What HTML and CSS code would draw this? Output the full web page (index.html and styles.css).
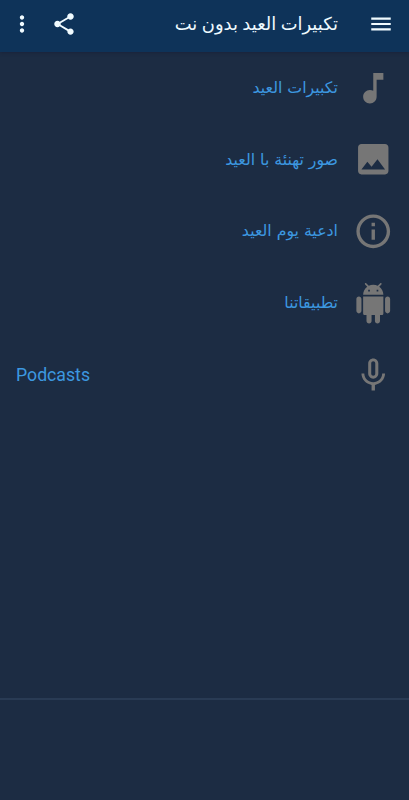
FILE: index.html
```html
<!DOCTYPE html>
<html lang="ar" dir="rtl">
<head>
<meta charset="utf-8">
<title>تكبيرات العيد بدون نت</title>
<link rel="stylesheet" href="styles.css">
</head>
<body>
<header class="bar">
  <svg class="bar-icon menu" viewBox="0 0 24 24"><path d="M3 18h18v-2H3v2zm0-5h18v-2H3v2zm0-7v2h18V6H3z"/></svg>
  <h1 class="title"><span>تكبيرات العيد بدون نت</span></h1>
  <svg class="bar-icon share" viewBox="0 0 24 24"><path d="M18 16.08c-.76 0-1.44.3-1.96.77L8.91 12.7c.05-.23.09-.46.09-.7s-.04-.47-.09-.7l7.05-4.11c.54.5 1.25.81 2.04.81 1.66 0 3-1.34 3-3s-1.34-3-3-3-3 1.34-3 3c0 .24.04.47.09.7L8.04 9.81C7.5 9.31 6.79 9 6 9c-1.66 0-3 1.34-3 3s1.34 3 3 3c.79 0 1.5-.31 2.04-.81l7.12 4.16c-.05.21-.08.43-.08.65 0 1.61 1.31 2.92 2.92 2.92s2.92-1.31 2.92-2.92-1.31-2.92-2.92-2.92z"/></svg>
  <svg class="bar-icon more" viewBox="0 0 24 24"><path d="M12 8c1.1 0 2-.9 2-2s-.9-2-2-2-2 .9-2 2 .9 2 2 2zm0 2c-1.1 0-2 .9-2 2s.9 2 2 2 2-.9 2-2-.9-2-2-2zm0 6c-1.1 0-2 .9-2 2s.9 2 2 2 2-.9 2-2-.9-2-2-2z"/></svg>
</header>
<main class="list">
  <div class="row">
    <svg class="icon" viewBox="0 0 24 24"><path d="M12 3v10.55c-.59-.34-1.27-.55-2-.55-2.21 0-4 1.79-4 4s1.79 4 4 4 4-1.79 4-4V7h4V3h-6z"/></svg>
    <span class="label">تكبيرات العيد</span>
  </div>
  <div class="row">
    <svg class="icon" viewBox="0 0 24 24"><path d="M21 19V5c0-1.1-.9-2-2-2H5c-1.1 0-2 .9-2 2v14c0 1.1.9 2 2 2h14c1.1 0 2-.9 2-2zM8.5 13.5l2.5 3.01L14.5 12l4.5 6H5l3.5-4.5z"/></svg>
    <span class="label">صور تهنئة با العيد</span>
  </div>
  <div class="row">
    <svg class="icon" viewBox="0 0 24 24"><path d="M11 17h2v-6h-2v6zm1-15C6.48 2 2 6.48 2 12s4.48 10 10 10 10-4.48 10-10S17.52 2 12 2zm0 18c-4.41 0-8-3.59-8-8s3.59-8 8-8 8 3.59 8 8-3.59 8-8 8zM11 9h2V7h-2v2z"/></svg>
    <span class="label">ادعية يوم العيد</span>
  </div>
  <div class="row">
    <svg class="icon" viewBox="0 0 24 24"><path d="M6 18c0 .55.45 1 1 1h1v3.5c0 .83.67 1.5 1.5 1.5s1.5-.67 1.5-1.5V19h2v3.5c0 .83.67 1.5 1.5 1.5s1.5-.67 1.5-1.5V19h1c.55 0 1-.45 1-1V8H6v10zM3.5 8C2.67 8 2 8.67 2 9.5v7c0 .83.67 1.5 1.5 1.5S5 17.33 5 16.5v-7C5 8.67 4.33 8 3.5 8zm17 0c-.83 0-1.5.67-1.5 1.5v7c0 .83.67 1.5 1.5 1.5s1.5-.67 1.5-1.5v-7c0-.83-.67-1.5-1.5-1.5zm-4.97-5.84l1.3-1.3c.2-.2.2-.51 0-.71-.2-.2-.51-.2-.71 0l-1.48 1.48C13.85 1.23 12.95 1 12 1c-.96 0-1.86.23-2.66.63L7.85.15c-.2-.2-.51-.2-.71 0-.2.2-.2.51 0 .71l1.31 1.31C6.97 3.26 6 5.01 6 7h12c0-1.99-.97-3.75-2.47-4.84zM10 5H9V4h1v1zm5 0h-1V4h1v1z"/></svg>
    <span class="label">تطبيقاتنا</span>
  </div>
  <div class="row">
    <svg class="icon" viewBox="0 0 24 24"><path d="M12 14c1.66 0 3-1.34 3-3V5c0-1.66-1.34-3-3-3S9 3.34 9 5v6c0 1.66 1.34 3 3 3zm-1.2-9.1c0-.66.54-1.2 1.2-1.2s1.2.54 1.2 1.2l-.01 6.2c0 .66-.53 1.2-1.19 1.2s-1.2-.54-1.2-1.2V4.9zM17.3 11c0 3-2.54 5.1-5.3 5.1S6.7 14 6.7 11H5c0 3.41 2.72 6.23 6 6.72V21h2v-3.28c3.28-.48 6-3.3 6-6.72h-1.7z"/></svg>
    <span class="label latin" dir="ltr">Podcasts</span>
  </div>
</main>
<footer class="panel"></footer>
</body>
</html>
```
FILE: styles.css
```css
* { box-sizing: border-box; }
body {
  margin: 0;
  height: 800px;
  display: flex;
  flex-direction: column;
  overflow: hidden;
  background: #1c2c43;
  font-family: Roboto, "Noto Sans", "DejaVu Sans", sans-serif;
}
.bar {
  height: 52px;
  flex: none;
  display: flex;
  align-items: center;
  padding: 0 15px 4px 9px;
  background: #0e3359;
  box-shadow: 0 1px 3px #1a233a;
}
.bar-icon { width: 26px; height: 26px; fill: #f0fbff; flex: none; }
.title {
  flex: 1;
  margin: 0 30px 0 0;
  font-size: 17.9px;
  font-weight: 400;
  line-height: 30px;
  color: #eefaff;
  white-space: nowrap;
}
.share { margin-left: 16px; }
.list { flex: 1; }
.row { height: 71.8px; display: flex; align-items: center; padding: 0 15.5px 0 16px; }
.icon { width: 40.5px; height: 40.5px; flex: none; fill: #767676; overflow: visible; }
.label {
  margin-right: 15px;
  font-size: 15.8px;
  line-height: 30px;
  word-spacing: 1px;
  color: #3c98e0;
  white-space: nowrap;
}
.latin { flex: 1; text-align: left; font-size: 17.7px; }
.panel { height: 102px; flex: none; border-top: 2px solid #293b54; }
```
